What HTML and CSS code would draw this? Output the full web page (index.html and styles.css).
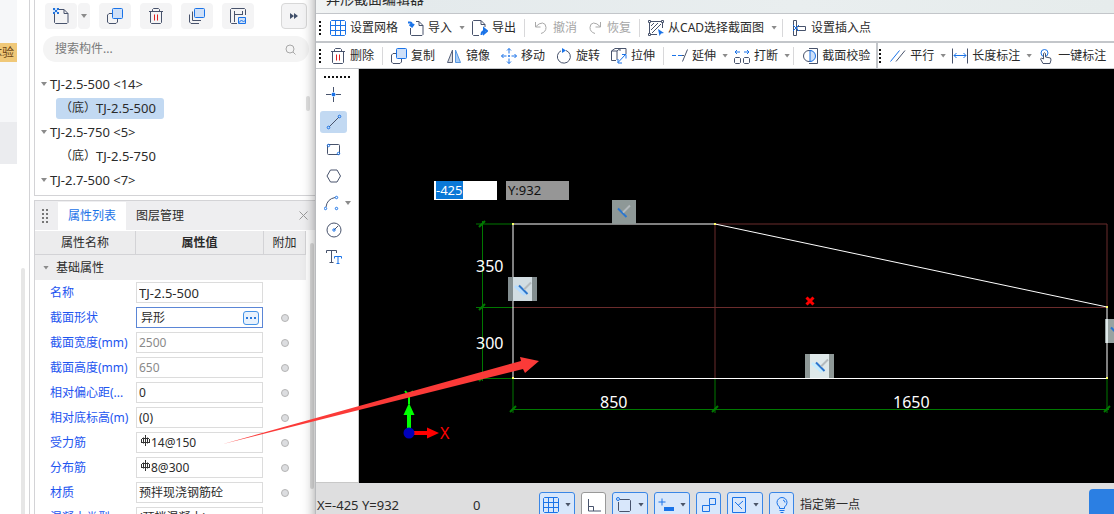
FILE: index.html
```html
<!DOCTYPE html>
<html lang="zh-CN">
<head>
<meta charset="utf-8">
<title>异形截面编辑器</title>
<link rel="stylesheet" href="styles.css">
</head>
<body>
<svg class="defs" aria-hidden="true">
  <symbol id="grid" viewBox="0 0 16 16"><path class="b" d="M1.5.5h13l1 1v13l-1 1h-13l-1-1v-13zM5.5.5v15M10.5.5v15M.5 5.5h15M.5 10.5h15"/></symbol>
  <symbol id="copy" viewBox="0 0 16 16"><path class="d" d="M5 5.500H2L.5 7v7L2 15.500h7l1.500-1.500v-3"/><rect class="b f" x="5.500" y=".5" width="10" height="10" rx="1"/></symbol>
  <symbol id="trash" viewBox="0 0 16 16"><path class="d" d="M1 3.500h14M4.500 3V1.500L5.500.5h5l1 1V3M2.500 4v10.500l1 1h9l1-1V4"/><path class="r" d="M6.500 6.500v6M9.500 6.500v6"/></symbol>
  <symbol id="perp" viewBox="0 0 16 16"><path d="M2 4.500l8.500 8.500" stroke="#2a76cf" stroke-width="2"/><path d="M7 8.500l7-7" stroke="#b4babd" stroke-width="2"/></symbol>
  <symbol id="rebar" viewBox="0 0 9 11"><path d="M4.500 0v11M2.500 2.500v6M6.500 2.500v6M0 7.500h9M1 3.500h7M.5 4v3M8.500 4v3" stroke="#333" fill="none"/></symbol>
</svg>

<div class="app">
  <aside class="rail">
    <div class="rail-top"><span class="badge">体验</span></div>
    <div class="rail-block"></div>
    <div class="rail-scroll"></div>
  </aside>

  <div class="side">
    <section class="panel components">
      <div class="comp-tools">
        <div class="split">
          <button class="sq" aria-label="新建"><svg class="ic" viewBox="0 0 16 16"><path class="d" d="M6 1.500h5l4 4v9l-1 1H2.500l-1-1V6M11 1.500v4h4"/><path d="M0 0h5v5H0z" fill="#cfe2fa"/><path d="M0 0h2v2H0zM4 0h2v2H4zM2 2h2v2H2zM0 4h2v2H0zM4 4h2v2H4z" fill="#2374dc"/></svg></button>
          <button class="sq slim" aria-label="新建选项"><i class="caret"></i></button>
        </div>
        <button class="sq" aria-label="复制"><svg class="ic"><use href="#copy"/></svg></button>
        <button class="sq" aria-label="删除"><svg class="ic"><use href="#trash"/></svg></button>
        <button class="sq" aria-label="层间复制"><svg class="ic" viewBox="0 0 16 16"><path class="d" d="M3.500 3.500v9h8.500M.5 6.500V14L2 15.500h8"/><rect class="b f" x="5.500" y=".5" width="10" height="9" rx="1"/></svg></button>
        <button class="sq" aria-label="存档"><svg class="ic" viewBox="0 0 16 16"><path class="d" d="M7 15.500H1.500l-1-1v-13l1-1h13l1 1V7M4.500 3v11M4.500 6.500h8.500M12.500 3v4"/><path class="b f" d="M8.500 9.500h7v6h-7zM8.500 15l3-3 2 2 2-2"/></svg></button>
        <button class="sq more" aria-label="更多"><svg width="8" height="6" viewBox="0 0 8 6"><path d="M0 0l4 3-4 3zM4 0l4 3-4 3z" fill="#41506a"/></svg></button>
      </div>
      <label class="search">
        <input type="text" placeholder="搜索构件..." aria-label="搜索构件">
        <svg width="11" height="11" viewBox="0 0 11 11"><circle cx="5" cy="5" r="4" fill="none" stroke="#a8a8a8"/><path d="M8 8l2.500 2.500" stroke="#a8a8a8"/></svg>
      </label>
      <div class="tree-wrap">
        <ul class="tree">
          <li><i class="caret"></i><span class="lat">TJ-2.5-500 &lt;14&gt;</span></li>
          <li class="leaf"><a class="node on" href="#a">（底）<span class="lat">TJ-2.5-500</span></a></li>
          <li><i class="caret"></i><span class="lat">TJ-2.5-750 &lt;5&gt;</span></li>
          <li class="leaf"><a class="node" href="#b">（底）<span class="lat">TJ-2.5-750</span></a></li>
          <li><i class="caret"></i><span class="lat">TJ-2.7-500 &lt;7&gt;</span></li>
        </ul>
        <span class="thumb"></span>
      </div>
    </section>

    <section class="panel props">
      <header class="tabs">
        <span class="grip"></span>
        <button class="tab on">属性列表</button>
        <button class="tab">图层管理</button>
        <button class="close" aria-label="关闭"><svg width="9" height="9" viewBox="0 0 9 9"><path d="M.5.5l8 8M8.500.5l-8 8" stroke="#999"/></svg></button>
      </header>
      <div class="props-body">
        <table class="grid">
          <colgroup><col class="c1"><col class="c2"><col class="c3"></colgroup>
          <thead><tr><th>属性名称</th><th class="strong">属性值</th><th>附加</th></tr></thead>
          <tbody>
            <tr class="group"><td colspan="3"><i class="caret"></i>基础属性</td></tr>
            <tr><td><label for="p1">名称</label></td><td><div class="field"><input id="p1" class="lat" value="TJ-2.5-500"></div></td><td></td></tr>
            <tr><td><label for="p2">截面形状</label></td><td><div class="field focus"><input id="p2" value="异形"><button class="dots" aria-label="编辑截面"><i></i><i></i><i></i></button></div></td><td><input type="checkbox" aria-label="附加 截面形状"></td></tr>
            <tr><td><label for="p3">截面宽度(mm)</label></td><td><div class="field"><input id="p3" value="2500" disabled></div></td><td><input type="checkbox" aria-label="附加 截面宽度"></td></tr>
            <tr><td><label for="p4">截面高度(mm)</label></td><td><div class="field"><input id="p4" value="650" disabled></div></td><td><input type="checkbox" aria-label="附加 截面高度"></td></tr>
            <tr><td><label for="p5">相对偏心距(...</label></td><td><div class="field"><input id="p5" value="0"></div></td><td><input type="checkbox" aria-label="附加 相对偏心距"></td></tr>
            <tr><td><label for="p6">相对底标高(m)</label></td><td><div class="field"><input id="p6" value="(0)"></div></td><td><input type="checkbox" aria-label="附加 相对底标高"></td></tr>
            <tr><td><label for="p7">受力筋</label></td><td><div class="field"><svg class="rebar"><use href="#rebar"/></svg><input id="p7" value="14@150"></div></td><td><input type="checkbox" aria-label="附加 受力筋"></td></tr>
            <tr><td><label for="p8">分布筋</label></td><td><div class="field"><svg class="rebar"><use href="#rebar"/></svg><input id="p8" value="8@300"></div></td><td><input type="checkbox" aria-label="附加 分布筋"></td></tr>
            <tr><td><label for="p9">材质</label></td><td><div class="field"><input id="p9" value="预拌现浇钢筋砼"></div></td><td><input type="checkbox" aria-label="附加 材质"></td></tr>
            <tr><td><label for="p10">混凝土类型</label></td><td><div class="field"><input id="p10" value="(预拌混凝土)"></div></td><td><input type="checkbox" aria-label="附加 混凝土类型"></td></tr>
          </tbody>
        </table>
        <span class="props-thumb"></span>
      </div>
    </section>
  </div>

  <main class="editor">
    <header class="title">异形截面编辑器</header>
    <div class="bar">
      <span class="vgrip"></span>
      <button class="tool"><svg class="ic"><use href="#grid"/></svg>设置网格</button>
      <button class="tool"><svg class="ic" viewBox="0 0 16 16"><path class="d" d="M8 1.500h3l4 4v9l-1 1H3.500l-1-1V8M11 1.500v4h4"/><path class="b2" d="M0 2.500h2q2 0 2 3M1.500 4.500l2.500 2 2-2.500"/></svg>导入</button>
      <i class="caret"></i>
      <button class="tool"><svg class="ic" viewBox="0 0 16 16"><path class="d" d="M7 15.500H1.500l-1-1v-13l1-1H9l4 4V7M9 .5v4h4"/><path class="b2" d="M9.500 15q0-4 3.500-4M12 8.500l3 2.500-3 2.500z"/></svg>导出</button>
      <i class="sep"></i>
      <button class="tool" disabled><svg class="ic" viewBox="0 0 16 16"><path class="g" d="M2.500 2v5h5M3 6.500Q6 3 9.500 3 13 3.500 13 7.500 13 12 8 13.500"/></svg>撤消</button>
      <button class="tool" disabled><svg class="ic" viewBox="0 0 16 16"><path class="g" d="M13.500 2v5h-5M13 6.500Q10 3 6.500 3 3 3.500 3 7.500 3 12 8 13.500"/></svg>恢复</button>
      <i class="sep"></i>
      <button class="tool"><svg class="ic" viewBox="0 0 16 16"><path class="d" d="M3 1.500h10M1.500 3v10M14.500 3v5M3 14.500h6M.5.5h2v2h-2zM13.500.5h2v2h-2zM.5 13.500h2v2h-2zM3 6l3-3M3 10l7-7M4 13l9-9"/><path d="M10 9l6 4-3 .5-1.500 2.500z" fill="#1a73e8"/></svg>从CAD选择截面图</button>
      <i class="caret"></i>
      <i class="sep"></i>
      <button class="tool"><svg class="ic" viewBox="0 0 16 16"><path class="d" d="M2.500.5h3v15h-3zM6 6.500h8.500v4H6z"/><path class="b" d="M2 5l6 6M8 5l-6 6"/></svg>设置插入点</button>
    </div>
    <div class="bar dense">
      <span class="vgrip"></span>
      <button class="tool"><svg class="ic"><use href="#trash"/></svg>删除</button>
      <i class="sep"></i>
      <button class="tool"><svg class="ic"><use href="#copy"/></svg>复制</button>
      <button class="tool"><svg class="ic" viewBox="0 0 16 16"><path d="M6.500 2v12.500H1.500z" fill="#d8dade" stroke="#56617a"/><path d="M9.500 2v12.500h5z" fill="#a9cdf7" stroke="#5596e0"/></svg>镜像</button>
      <button class="tool"><svg class="ic" viewBox="0 0 16 16"><path class="b" d="M8 .5v5M8 10.500v5M.5 8h5M10.500 8h5M6 2.500l2-2 2 2M6 13.500l2 2 2-2M2.500 6l-2 2 2 2M13.500 6l2 2-2 2M7 8h2M8 7v2"/></svg>移动</button>
      <button class="tool"><svg class="ic" viewBox="0 0 16 16"><path class="d" d="M10 2.500a6.500 6.500 0 1 1-5 .3"/><path d="M6 0l4 2.500L6 5z" fill="#1a73e8"/></svg>旋转</button>
      <button class="tool"><svg class="ic" viewBox="0 0 16 16"><path class="d" d="M5 12.500H.5V3L4 .5h5V3M.5 3H6v9M6 3l3-2.500h6V6"/><path class="b" d="M7 14.500l7.500-8M11 6.500h4v4M7 11v4h4"/></svg>拉伸</button>
      <i class="sep"></i>
      <button class="tool"><svg class="ic" viewBox="0 0 16 16"><path class="b" d="M0 7.500h4M6 7.500h4"/><path class="d" d="M10 7.500h2M10.500 13.500l5-12"/></svg>延伸</button>
      <i class="caret"></i>
      <button class="tool"><svg class="ic" viewBox="0 0 16 16"><path class="d" d="M1.500 9.500h4l1 1v4l-1 1h-4l-1-1v-4zM10.500 9.500h4l1 1v4l-1 1h-4l-1-1v-4z"/><path class="b" d="M1 4h5M3 2L1 4l2 2M10 4h5M13 2l2 2-2 2"/></svg>打断</button>
      <i class="caret"></i>
      <i class="sep"></i>
      <button class="tool"><svg class="ic" viewBox="0 0 16 16"><path class="d" d="M7 .5h8.500v15H7"/><circle class="d w" cx="7" cy="8" r="5.500"/><path class="b f" d="M8 2.500v11a5.500 5.500 0 0 0 0-11z"/></svg>截面校验</button>
      <i class="wall"></i>
      <span class="vgrip"></span>
      <button class="tool"><svg class="ic" viewBox="0 0 16 16"><path class="b" d="M.5 13.500l9-11"/><path class="d" d="M6 13.500l9-11"/></svg>平行</button>
      <i class="caret"></i>
      <button class="tool"><svg class="ic" viewBox="0 0 16 16"><path class="d" d="M.5.5v15M15.500.5v15"/><path class="b" d="M2 7.500h12M4.500 5L2 7.500 4.500 10M11.500 5L14 7.500 11.500 10"/></svg>长度标注</button>
      <i class="caret"></i>
      <button class="tool"><svg class="ic" viewBox="0 0 16 16"><circle class="b" cx="6.500" cy="5" r="3.500"/><path class="d w" d="M5.500 11V5.500q1-1.500 2 0V9l5 1 .5 2-1 3.500H5L2.500 11l1-1z"/></svg>一键标注</button>
    </div>

    <div class="work">
      <nav class="palette">
        <span class="hgrip"></span>
        <button class="pick" aria-label="点"><svg class="ic" viewBox="0 0 16 16"><path class="d" d="M7.500 0v5M7.500 10v5M0 7.500h5M10 7.500h5"/><circle cx="7.500" cy="7.500" r="2" fill="#1a73e8"/></svg></button>
        <button class="pick on" aria-label="直线"><svg class="ic" viewBox="0 0 16 16"><path class="d" d="M3 13L13 3"/><circle class="b" cx="2.500" cy="13.500" r="1.300"/><circle class="b" cx="13.500" cy="2.500" r="1.300"/></svg></button>
        <button class="pick" aria-label="矩形"><svg class="ic" viewBox="0 0 16 16"><rect class="d" x="1.500" y="3.500" width="12" height="10" rx="1"/><circle class="b" cx="2.500" cy="4.500" r="1.200"/><circle class="b" cx="12.500" cy="12.500" r="1.200"/></svg></button>
        <button class="pick" aria-label="多边形"><svg class="ic" viewBox="0 0 16 16"><path class="d" d="M4.500 2h6.500l3.500 6L11 14H4.500L1 8z"/></svg></button>
        <div class="pick-row"><button class="pick" aria-label="圆弧"><svg class="ic arc" viewBox="0 0 16 16"><path class="d" d="M2 12Q3 4 11 2.500"/><circle class="b" cx="1.500" cy="13.500" r="1.200"/><circle class="b" cx="12.500" cy="2.500" r="1.200"/><circle class="b" cx="12.500" cy="13.500" r="1.200"/></svg></button><i class="caret"></i></div>
        <button class="pick" aria-label="圆"><svg class="ic" viewBox="0 0 16 16"><circle class="d" cx="8" cy="8" r="7"/><path class="d" d="M8 8l4-4"/><circle class="b" cx="8" cy="8" r="1.200"/></svg></button>
        <button class="pick" aria-label="文字"><svg class="ic" viewBox="0 0 16 16"><path class="d" d="M.5 4V1.500h10V4M5.500 1.500v12M3.500 13.500h4"/><path class="b" d="M8.500 9.500v-2h7v2M12 7.500v7M10.500 14.500h3"/></svg></button>
      </nav>
      <div class="canvas">
        <svg class="drawing" role="img" aria-label="截面图">
          <g transform="translate(-359 -69)" fill="none">
            <g stroke="#6b2c2c"><path d="M715 224H1107V307M715 224V378M513 307.500H1107"/></g>
            <g stroke="#007800">
              <path d="M476 224H513M476 307.500H513M476 378.500H513M482.500 221V381M513 379V413M715 379V413M1107 379V413M513 409.500H1109"/>
              <path stroke-width="2" d="M479 227l6-6M479 310l6-6M479 381l6-6M510 412l6-6M712 412l6-6M1104 412l6-6"/>
            </g>
            <g stroke="#fff"><path d="M715 224L1107 307"/><path d="M513 378.500H1107M513 378V224H715M1107 307V378"/></g>
            <path fill="#ff6" d="M512 223h2v2h-2zM714 223h2v2h-2zM1106 306h2v2h-2zM1106 377h2v2h-2zM512 377h2v2h-2z"/>
            <g fill="#fff" class="dim"><text x="476" y="272">350</text><text x="476" y="349">300</text><text x="600" y="408">850</text><text x="893" y="408">1650</text></g>
            <path d="M806.500 297.500l7 7M813.500 297.500l-7 7" stroke="red" stroke-width="3"/>
            <path fill="#8e9897" d="M612 200h24v24h-24z"/><use href="#perp" x="616" y="204" width="16" height="16"/>
            <path fill="#838e90" d="M508 277h29v24h-29z"/><path fill="#d2dde2" d="M513 277h19v24h-19z"/><path d="M515 286l10 9" stroke="#b5dcff" stroke-width="3"/><use href="#perp" x="517" y="281" width="16" height="16"/>
            <path fill="#8e9897" d="M805 354h29v24h-29z"/><path fill="#dfe9ea" d="M810 354h19v24h-19z"/><path d="M812 363l10 9" stroke="#c4ecff" stroke-width="3"/><use href="#perp" x="814" y="358" width="16" height="16"/>
            <path fill="#98a3a1" d="M1105 319h24v24h-24z"/><path d="M1107 319v24" stroke="#dfe9ea" stroke-width="2"/><use href="#perp" x="1109" y="323" width="16" height="16"/>
            <path stroke="#0f0" stroke-width="4" d="M409 430V413"/><path fill="#0f0" d="M403.500 415l5.500-12 5.500 12z"/><path stroke="#0f0" stroke-width="2" d="M409 404v-8l-4-5M409 396l4-5"/>
            <path stroke="red" stroke-width="4" d="M412 433h16"/><path fill="red" d="M427 427.500l12 5.500-12 5.500z"/>
            <circle cx="409" cy="433" r="5.500" fill="#00b"/>
            <text class="dim" x="440" y="439" fill="red">X</text>
          </g>
        </svg>
        <div class="coord x"><input type="text" value="-425" aria-label="X 坐标"></div>
        <div class="coord y">Y:932</div>
      </div>
    </div>

    <footer class="status">
      <span class="xy">X=-425 Y=932</span><span class="zero">0</span>
      <div class="toggles">
        <button class="tg" aria-label="网格"><svg class="ic"><use href="#grid"/></svg><i class="caret"></i></button>
        <button class="tg off" aria-label="正交"><svg class="ic" viewBox="0 0 16 16"><path class="d" d="M2.500 2v12H15M2.500 9.500h5V14"/></svg></button>
        <button class="tg" aria-label="捕捉"><svg class="ic" viewBox="0 0 16 16"><path class="d" d="M4 2.500h9.500l1 1v10l-1 1H3.500l-1-1V5"/><circle class="b" cx="2" cy="2" r="1.500"/></svg><i class="caret"></i></button>
        <button class="tg" aria-label="动态输入"><svg class="ic" viewBox="0 0 16 16"><path class="b" d="M4 1.500v7M.5 5h7"/><path d="M6 10h10v4H6z" fill="#1a73e8"/></svg><i class="caret"></i></button>
        <button class="tg" aria-label="参照"><svg class="ic" viewBox="0 0 16 16"><path class="b" d="M8.500 1.500h6v6h-6zM1.500 8.500h7v6h-7zM8.500 7.500v2"/></svg></button>
        <button class="tg" aria-label="约束"><svg class="ic" viewBox="0 0 16 16"><path class="b" d="M1.500.5h13v15h-13zM4 5l7 7M7 8.500L12 4"/></svg><i class="caret"></i></button>
        <button class="tg" aria-label="提示"><svg class="ic" viewBox="0 0 16 16"><path class="b" d="M5.500 11.500V10Q3 8 3 5.500a5 5 0 0 1 10 0Q13 8 10.500 10v1.500zM5.500 13.500h5M6.500 15.500h3M9 3q2 .5 2 2.500"/></svg></button>
      </div>
      <span class="hint">指定第一点</span>
      <button class="ok" aria-label="确定"></button>
    </footer>
  </main>
</div>
<svg class="callout" aria-hidden="true"><path d="M223 444L521 361 520 357 539 361 525 373 523 369z" fill="#fb3a38"/></svg>
</body>
</html>
```

FILE: styles.css
```css
* { box-sizing: border-box; }
body { margin: 0; height: 100vh; overflow: hidden; position: relative; background: #fff; color: #2b2b2b; font: 12px/16px "Noto Sans", "Noto Sans CJK SC", sans-serif; }
button, input { font: inherit; color: inherit; margin: 0; padding: 0; border: 0; background: none; }
i { display: block; flex: none; }
svg { display: block; flex: none; }
.defs { position: absolute; width: 0; height: 0; }
.ic { width: 16px; height: 16px; }
.b, .d, .r, .g, .b2 { fill: none; stroke: #1a73e8; }
.b2 { stroke-width: 2; }
.d { stroke: #48536c; }
.r { stroke: #e02020; }
.g { stroke: #a9a9a9; }
.f { fill: #cfe0f8; }
.w { fill: #fff; }
.lat, .field .lat { font-size: 13px; }
.caret { width: 6px; height: 4px; background: #8b8b8b; clip-path: polygon(0 0, 100% 0, 50% 100%); }

.app { display: flex; height: 100vh; overflow: hidden; }

.rail { flex: 0 0 30px; display: flex; flex-direction: column; border-right: 1px solid #d3d3d6; }
.rail-top { width: 17px; height: 122px; padding-top: 43px; background: #f6f7f9; }
.badge { display: flex; justify-content: flex-end; height: 19px; padding-right: 3px; overflow: hidden; background: #f0c878; color: #6b4413; line-height: 19px; white-space: nowrap; }
.rail-block { width: 17px; height: 42px; background: #ebecef; }
.rail-scroll { flex: 1; width: 4px; margin: 104px 0 0 21px; border-radius: 2px 2px 0 0; background: #e6e6e6; }

.side { flex: 0 0 285px; min-width: 0; display: flex; flex-direction: column; gap: 4px; padding-left: 4px; }
.panel { border-left: 1px solid #d3d3d6; }
.components { height: 196px; padding-top: 3px; border-bottom: 1px solid #d3d3d6; }
.comp-tools { display: flex; gap: 9px; padding: 0 8px 0 10px; }
.split { display: flex; gap: 1px; }
.sq { width: 32px; height: 26px; display: flex; align-items: center; justify-content: center; border-radius: 4px; background: #f4f4f5; }
.slim { width: 12px; }
.more { width: 26px; margin-left: auto; border: 1px solid #d8d8d8; }
.search { display: flex; align-items: center; height: 26px; margin: 7px 6px 0 8px; padding: 0 13px 0 12px; border-radius: 13px; background: #f4f4f4; }
.search input { flex: 1; min-width: 0; outline: 0; }
.search input::placeholder { color: #7a7a7a; opacity: 1; }
.tree-wrap { display: flex; justify-content: space-between; padding: 10px 5px 0 6px; }
.tree { margin: 0; padding: 0; list-style: none; }
.tree li { display: flex; align-items: center; gap: 3px; height: 24px; white-space: nowrap; }
.tree .leaf { padding-left: 15px; }
.node { display: flex; align-items: center; height: 21px; padding: 0 8px 0 4px; border-radius: 3px; color: inherit; text-decoration: none; }
.node.on { background: #c2d9f2; }
.thumb { width: 4px; height: 15px; margin-top: 24px; border-radius: 2px; background: #e0e0e0; }

.props { flex: 1; min-width: 0; min-height: 0; border-top: 1px solid #d3d3d6; }
.tabs { display: flex; align-items: center; height: 29px; background: #eeeef0; }
.grip { width: 8px; height: 16px; margin: 0 9px 0 6px; background: radial-gradient(#777 1px, transparent 1px) 0 0 / 4px 4px; }
.tab { height: 28px; padding: 0 10px; }
.tab.on { background: #fff; color: #1a73e8; }
.close { margin-left: auto; padding-right: 7px; }
.props-body { display: flex; gap: 4px; padding-top: 1px; }
table.grid { flex: 0 1 auto; width: 100%; min-width: 0; table-layout: fixed; border-collapse: separate; border-spacing: 0; }
.c1 { width: 101px; }
.c2 { width: 128px; }
.grid th { height: 24px; padding: 0; background: #ececed; border-right: 1px solid #d3d3d6; border-bottom: 1px solid #d3d3d6; font-weight: 400; white-space: nowrap; }
.grid .strong { font-weight: 700; }
.grid td { height: 25px; padding: 0; vertical-align: middle; white-space: nowrap; }
.grid td:first-child { padding-left: 15px; color: #1d55f0; }
.grid td:last-child { text-align: center; }
.grid .group td { padding-left: 21px; background: #ededee; color: #2b2b2b; text-align: left; }
.group .caret { float: left; margin: 6px 0 0 -13px; }
.field { display: flex; align-items: center; height: 21px; margin-right: 1px; padding: 0 3px 0 2px; border: 1px solid #dcdcdc; background: #fff; color: #2b2b2b; }
.field input { flex: 1; width: 0; min-width: 0; }
.field input:disabled { color: #8a8a8a; }
.field.focus { padding-left: 4px; border-color: #5b86d6; }
.rebar { width: 9px; height: 11px; margin: 0 1px 4px 2px; }
.dots { display: flex; align-items: center; justify-content: center; gap: 2px; width: 16px; height: 14px; border: 1px solid #4593e6; border-radius: 3px; background: #e8f2fd; }
.dots i { width: 2px; height: 2px; background: #2878dc; }
.grid input[type=checkbox] { appearance: none; display: inline-block; width: 8px; height: 8px; border: 1px solid #b5b5b5; border-radius: 50%; background: #dcdde0; vertical-align: middle; }
.props-thumb { flex: none; width: 4px; height: 246px; margin: 12px 1px 0 0; border-radius: 2px; background: #dedede; }

.editor { flex: 1; min-width: 0; display: flex; flex-direction: column; height: calc(100vh + 27px); margin-top: -15px; border-left: 1px solid #b9bbbe; background: #fff; box-shadow: 0 0 12px rgba(0, 0, 0, .4); position: relative; }
.title { height: 28px; padding-left: 10px; background: linear-gradient(90deg, #f2f4f4, #e4eaec 12%, #e9eeef 60%, #e6ecec); font-size: 14px; line-height: 28px; }
.bar { --gap: 0px; --sep: 3px; --car: 2px; display: flex; align-items: center; gap: var(--gap); height: 28px; padding-left: 3px; border-top: 1px solid #c3c6ca; white-space: nowrap; }
.dense { --gap: 1px; --sep: 2px; --car: 0px; border-top-width: 2px; border-bottom: 1px solid #c3c6ca; }
.tool { flex: none; display: flex; align-items: center; gap: 4px; padding: 0 5px; }
.tool:disabled { color: #a6a6a6; }
.vgrip { flex: none; width: 2px; height: 14px; margin-right: 3px; background: repeating-linear-gradient(#111 0 2px, transparent 2px 4px); }
.bar:not(.dense) .vgrip { margin-right: 4px; }
.sep { width: 1px; height: 18px; margin: 0 var(--sep); background: #d8d8da; }
.bar .caret { margin: 0 var(--car); }
.wall { width: 2px; height: 26px; background: #c3c6ca; }

.work { flex: 1; min-height: 0; display: flex; }
.palette { flex: 0 0 43px; display: flex; flex-direction: column; align-items: flex-start; gap: 5px; padding: 7px 0 0 4px; border-right: 1px solid #c8c8c8; border-bottom: 1px solid #c8c8c8; }
.hgrip { width: 26px; height: 2px; margin: 0 0 1px 4px; background: repeating-linear-gradient(90deg, #111 0 2px, transparent 2px 4px); }
.pick { display: flex; align-items: center; justify-content: center; width: 27px; height: 22px; border-radius: 3px; }
.pick.on { background: #c2d9f2; }
.pick-row { display: flex; align-items: center; margin-left: -2px; }
.canvas { flex: 1; min-width: 0; position: relative; overflow: hidden; background: #000; }
.drawing { width: 100%; height: 100%; }
.dim { font-size: 16px; }
.coord { position: absolute; top: 112px; width: 63px; height: 19px; padding-left: 2px; font-size: 13px; line-height: 19px; }
.coord.x { left: 75px; background: #fff; }
.coord.y { left: 147px; background: #969696; color: #111; }
.coord input { display: block; width: 27px; height: 18px; background: #0a78d7; color: #fff; }

.status { display: flex; align-items: center; height: 43px; padding-left: 1px; background: #dededf; font-size: 13px; }
.xy { width: 156px; }
.zero { width: 66px; }
.toggles { display: flex; gap: 6px; }
.tg { display: flex; align-items: center; justify-content: center; gap: 6px; width: 25px; height: 25px; border: 1px solid #3a86e6; border-radius: 3px; background: #d8e7fb; }
.tg:has(.caret) { width: 36px; }
.tg .caret { background: #4b5568; }
.tg.off { border-color: #999; background: #fff; }
.hint { margin-left: 6px; font-size: 12px; }
.ok { width: 25px; height: 31px; margin-left: auto; border-radius: 4px 0 0 4px; background: #2b7fe3; }

.callout { position: absolute; left: 0; top: 0; width: 100%; height: 100%; pointer-events: none; }
```
